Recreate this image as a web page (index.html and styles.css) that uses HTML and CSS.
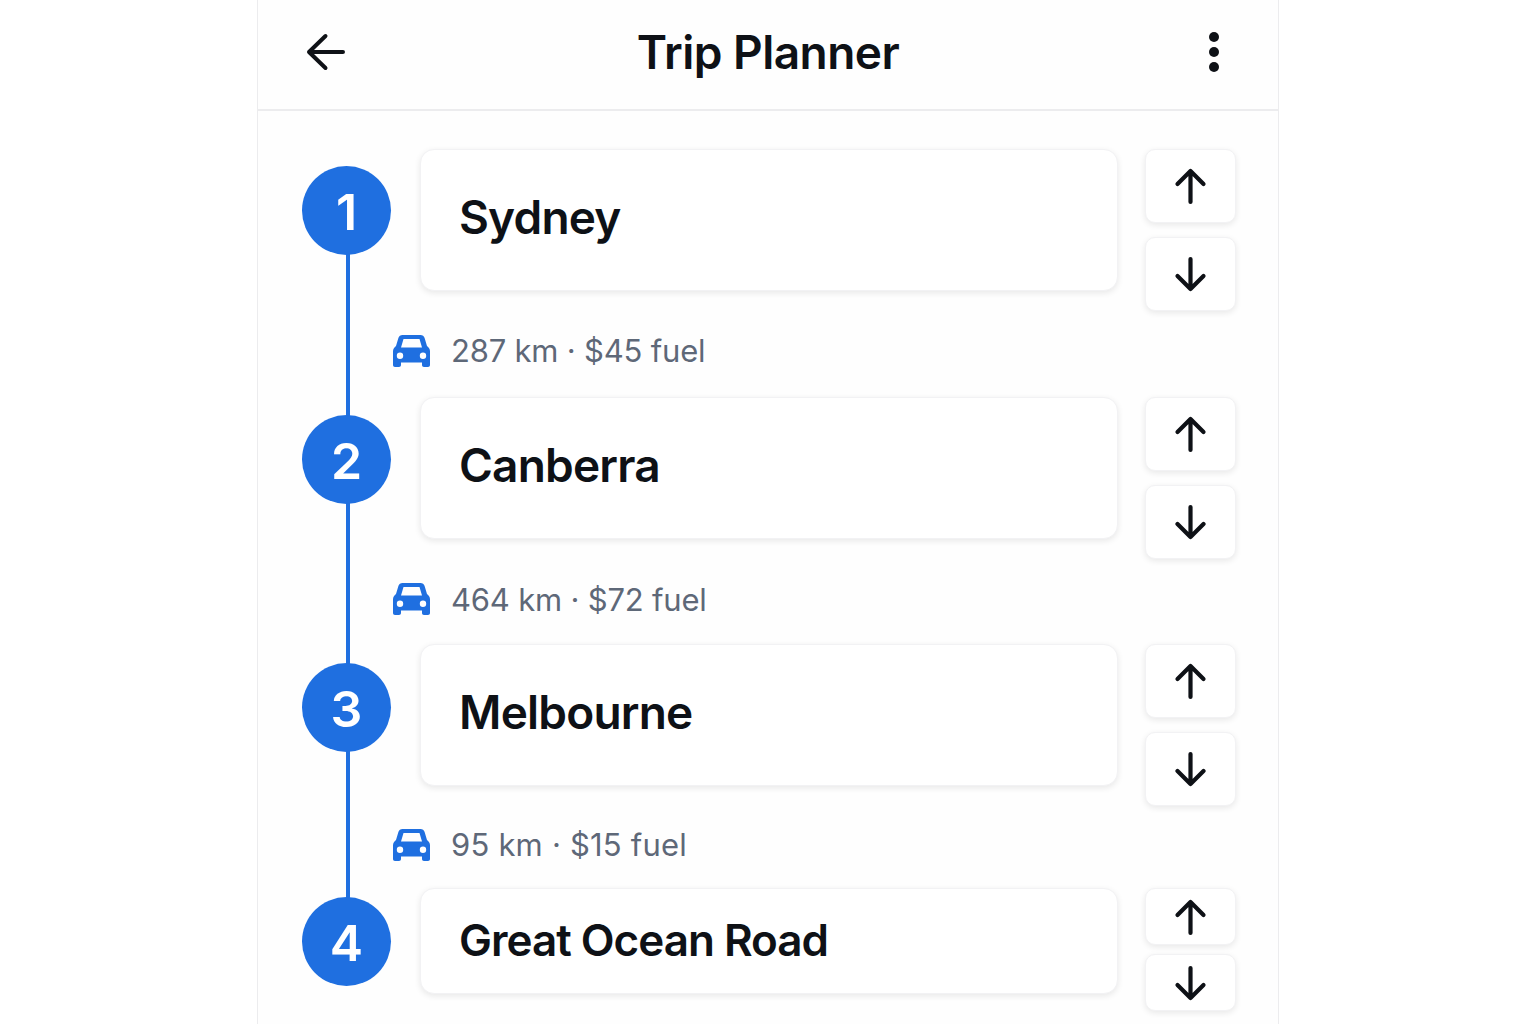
FILE: index.html
```html
<!DOCTYPE html>
<html lang="en">
<head>
    <meta charset="UTF-8">
    <meta name="viewport" content="width=device-width, initial-scale=1.0">
    <title>Trip Planner</title>
    <link rel="stylesheet" href="styles.css">
</head>
<body>
    <svg class="svg-defs" width="0" height="0" aria-hidden="true">
        <symbol id="icon-up" viewBox="0 0 36 38">
            <path d="M17.500 35V4M4.500 17 17.500 4l13 13"/>
        </symbol>
        <symbol id="icon-down" viewBox="0 0 36 38">
            <path d="M17.500 4v30M4.500 21l13 13 13-13"/>
        </symbol>
        <symbol id="icon-car" viewBox="0 0 37 32">
            <path fill-rule="evenodd" d="M9.500 0h18c2 0 3.500 1.200 4.100 3L34 11c2 1.500 3 3 3 5.500V30c0 1.200-.8 2-2 2h-4c-1.200 0-2-.8-2-2v-2.500H8V30c0 1.200-.8 2-2 2H2c-1.200 0-2-.8-2-2V16.500C0 14 1 12.500 3 11l2.400-8C6 1.200 7.500 0 9.500 0zM10.500 4 8 12.500h21L26.500 4h-16zM7 17.500a3.200 3.200 0 1 0 0 6.400 3.200 3.200 0 0 0 0-6.400zm23 0a3.200 3.200 0 1 0 0 6.400 3.200 3.200 0 0 0 0-6.400z"/>
        </symbol>
    </svg>

    <div class="phone">
        <header class="top-bar">
            <button type="button" class="bar-btn" aria-label="Back">
                <svg class="back-icon" viewBox="0 0 40 38"><path d="M37 19H3M19.500 3 3 19l16.500 16"/></svg>
            </button>
            <h1>Trip Planner</h1>
            <button type="button" class="bar-btn bar-btn-end" aria-label="More">
                <span class="kebab"><i></i><i></i><i></i></span>
            </button>
        </header>

        <main class="route">
            <div class="stop">
                <div class="badge">1</div>
                <div class="stop-card">Sydney</div>
                <div class="move-btns">
                    <button type="button" class="move-btn" aria-label="Move up"><svg class="arrow"><use href="#icon-up"/></svg></button>
                    <button type="button" class="move-btn" aria-label="Move down"><svg class="arrow"><use href="#icon-down"/></svg></button>
                </div>
            </div>
            <div class="leg leg-1">
                <svg class="car"><use href="#icon-car"/></svg>
                <span>287 km · $45 fuel</span>
            </div>

            <div class="stop stop-2">
                <div class="badge">2</div>
                <div class="stop-card">Canberra</div>
                <div class="move-btns">
                    <button type="button" class="move-btn" aria-label="Move up"><svg class="arrow"><use href="#icon-up"/></svg></button>
                    <button type="button" class="move-btn" aria-label="Move down"><svg class="arrow"><use href="#icon-down"/></svg></button>
                </div>
            </div>
            <div class="leg leg-2">
                <svg class="car"><use href="#icon-car"/></svg>
                <span>464 km · $72 fuel</span>
            </div>

            <div class="stop stop-3">
                <div class="badge">3</div>
                <div class="stop-card">Melbourne</div>
                <div class="move-btns">
                    <button type="button" class="move-btn" aria-label="Move up"><svg class="arrow"><use href="#icon-up"/></svg></button>
                    <button type="button" class="move-btn" aria-label="Move down"><svg class="arrow"><use href="#icon-down"/></svg></button>
                </div>
            </div>
            <div class="leg leg-3">
                <svg class="car"><use href="#icon-car"/></svg>
                <span>95 km · $15 fuel</span>
            </div>

            <div class="stop stop-short">
                <div class="badge">4</div>
                <div class="stop-card">Great Ocean Road</div>
                <div class="move-btns">
                    <button type="button" class="move-btn" aria-label="Move up"><svg class="arrow"><use href="#icon-up"/></svg></button>
                    <button type="button" class="move-btn" aria-label="Move down"><svg class="arrow"><use href="#icon-down"/></svg></button>
                </div>
            </div>
        </main>
    </div>
</body>
</html>
```

FILE: styles.css
```css
:root {
    --blue: #1f6fe0;
    --text-primary: #0e1116;
    --text-secondary: #5e6878;
    --border-color: #ececee;
    --card-border: #f2f2f4;
    --shadow: 0 2px 6px rgba(0, 0, 0, 0.09);
}

* {
    margin: 0;
    padding: 0;
    box-sizing: border-box;
}

html, body {
    height: 100%;
    overflow: hidden;
}

body {
    font-family: Inter, "Liberation Sans", sans-serif;
    color: var(--text-primary);
    background: #ffffff;
}

.svg-defs {
    position: absolute;
}

.phone {
    width: 1022px;
    height: 1024px;
    margin: 0 auto 0 257px;
    border-left: 1px solid var(--border-color);
    border-right: 1px solid var(--border-color);
    background: #fefefe;
}

.top-bar {
    height: 111px;
    padding: 0 44px 6px 48px;
    display: grid;
    grid-template-columns: 1fr auto 1fr;
    align-items: center;
    border-bottom: 2px solid var(--border-color);
}

.top-bar h1 {
    margin-right: 4px;
    font-size: 46px;
    font-weight: 560;
    letter-spacing: -0.5px;
}

.bar-btn {
    width: 40px;
    display: flex;
    justify-content: center;
    background: none;
    border: none;
}

.bar-btn-end {
    justify-self: end;
}

.back-icon {
    width: 40px;
    height: 38px;
    fill: none;
    stroke: var(--text-primary);
    stroke-width: 4;
    stroke-linecap: round;
    stroke-linejoin: round;
}

.kebab {
    display: flex;
    flex-direction: column;
    gap: 5px;
}

.kebab i {
    width: 10px;
    height: 10px;
    border-radius: 50%;
    background: var(--text-primary);
}

/* timeline */
.route {
    position: relative;
    padding: 38px 41px 0 44px;
}

/* line behind the badges */
.route::before {
    content: "";
    position: absolute;
    left: 88px;
    top: 100px;
    height: 700px;
    width: 4px;
    background: var(--blue);
}

.stop {
    position: relative;
    display: grid;
    grid-template-columns: 118px 698px 27px 91px;
    align-items: start;
}

.badge {
    width: 89px;
    height: 89px;
    margin-top: 17px;
    padding-top: 3px;
    display: flex;
    align-items: center;
    justify-content: center;
    border-radius: 50%;
    background: var(--blue);
    color: #ffffff;
    font-size: 50px;
    font-weight: 600;
}

.stop-2 .badge {
    margin-top: 18px;
}

.stop-3 .badge {
    margin-top: 19px;
}

.stop-card {
    height: 142px;
    padding: 0 0 6px 38px;
    display: flex;
    align-items: center;
    background: #ffffff;
    border: 1px solid var(--card-border);
    border-radius: 14px;
    box-shadow: var(--shadow);
    font-size: 46px;
    font-weight: 600;
    letter-spacing: -0.8px;
}

.move-btns {
    grid-column: 4;
    display: flex;
    flex-direction: column;
    gap: 14px;
}

.move-btn {
    height: 74px;
    display: flex;
    align-items: center;
    justify-content: center;
    background: #ffffff;
    border: 1px solid var(--card-border);
    border-radius: 10px;
    box-shadow: var(--shadow);
}

.arrow {
    width: 36px;
    height: 38px;
    fill: none;
    stroke: var(--text-primary);
    stroke-width: 4.2;
    stroke-linecap: round;
    stroke-linejoin: round;
}

.leg {
    display: flex;
    align-items: center;
    gap: 21px;
    padding: 0 0 5px 91px;
    color: var(--text-secondary);
    font-size: 31px;
    letter-spacing: -0.2px;
}

.leg-1 {
    height: 86px;
    padding-bottom: 7px;
}

.leg-2 {
    height: 85px;
}

.leg-3 {
    height: 82px;
    letter-spacing: 0.2px;
}

.car {
    width: 37px;
    height: 32px;
    fill: var(--blue);
}

.stop-short .badge {
    margin-top: 9px;
}

.stop-short .stop-card {
    height: 106px;
    padding-bottom: 2px;
    font-size: 44px;
    letter-spacing: -1px;
}

.stop-short .move-btn {
    height: 57px;
}

.stop-short .move-btns {
    gap: 9px;
}
```
